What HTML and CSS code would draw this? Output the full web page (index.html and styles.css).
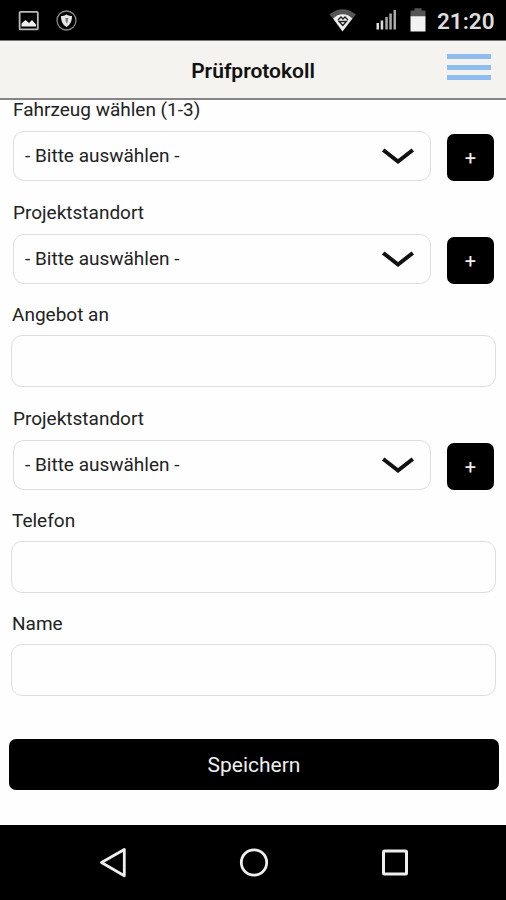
FILE: index.html
```html
<!DOCTYPE html>
<html lang="de">
<head>
<meta charset="utf-8">
<title>Prüfprotokoll</title>
<link rel="stylesheet" href="styles.css">
</head>
<body>
<div class="status">
  <svg class="notifications" width="70" height="40" viewBox="0 0 70 40">
    <rect x="1.6" y="11.8" width="18.2" height="17.6" rx="1" fill="none" stroke="#bbb" stroke-width="1.8"/>
    <path d="M3.500 26.500v-3l4-3.500 3.500 3 3-3 4 4.500v2z" fill="#eee"/>
    <circle cx="48.500" cy="20.500" r="9.500" fill="none" stroke="#888" stroke-width="1.300"/>
    <path d="M48.500 14.500c2 1.200 3.500 1.500 5.500 1.500 0 5-1.500 8.500-5.500 11-4-2.500-5.500-6-5.500-11 2 0 3.500-.3 5.500-1.500z" fill="#e5e5e5"/>
    <path d="M47.300 18h3l-1 5h-1.200z" fill="#777"/>
  </svg>
  <svg class="signals" width="100" height="40" viewBox="329 0 100 40">
    <path d="M329.500 14.500q13-10.500 26.500 0l-3.500 4q-10-6-19.500 0z" fill="#555"/>
    <path d="M333 18.500l4-3q5.500-2.300 11.500 0l4 3L342.500 31.500z" fill="#eee"/>
    <path d="M338 20l3-3 2 2 2-2 3 3M339 21.500h7.500l-3.700 4z" fill="none" stroke="#222" stroke-width="1.300"/>
    <path d="M376.500 23h2.500v6.500h-2.500zM380.700 20.500h2.500v9h-2.500z" fill="#ddd"/>
    <path d="M385.300 17h2.500v12.500h-2.500zM389.300 13.500h2.500v16h-2.500zM393.500 10h2.500v19.500h-2.500z" fill="#aaa"/>
    <path d="M410.500 10.500h4v-2.300h7v2.300h4v6h-15z" fill="#555"/>
    <path d="M410.500 16.200h15v15.300h-15z" fill="#f2f2f2"/>
  </svg>
  <span class="clock">21:20</span>
</div>
<header class="header">
  <h1 class="title">Prüfprotokoll</h1>
  <div class="menu"><i></i><i></i><i></i></div>
</header>
<main class="form">
  <div class="field choice">
    <label class="label">Fahrzeug wählen (1-3)</label>
    <div class="row">
      <div class="select"><span>- Bitte auswählen -</span><svg width="34" height="20" viewBox="0 0 34 20"><path d="M2.200 4L17 15.500 31.800 4" fill="none" stroke="#111" stroke-width="4"/></svg></div>
      <button class="add">+</button>
    </div>
  </div>
  <div class="field choice">
    <label class="label">Projektstandort</label>
    <div class="row">
      <div class="select"><span>- Bitte auswählen -</span><svg width="34" height="20" viewBox="0 0 34 20"><path d="M2.200 4L17 15.500 31.800 4" fill="none" stroke="#111" stroke-width="4"/></svg></div>
      <button class="add">+</button>
    </div>
  </div>
  <div class="field entry">
    <label class="label">Angebot an</label>
    <div class="input"></div>
  </div>
  <div class="field choice">
    <label class="label">Projektstandort</label>
    <div class="row">
      <div class="select"><span>- Bitte auswählen -</span><svg width="34" height="20" viewBox="0 0 34 20"><path d="M2.200 4L17 15.500 31.800 4" fill="none" stroke="#111" stroke-width="4"/></svg></div>
      <button class="add">+</button>
    </div>
  </div>
  <div class="field entry">
    <label class="label">Telefon</label>
    <div class="input"></div>
  </div>
  <div class="field entry">
    <label class="label">Name</label>
    <div class="input"></div>
  </div>
  <button class="save">Speichern</button>
</main>
<nav class="nav">
  <svg width="28" height="32" viewBox="0 0 28 32"><path d="M2.500 15.500L25.300 2.500v26.300z" fill="none" stroke="#eee" stroke-width="2.800" stroke-linejoin="round"/></svg>
  <svg width="30" height="32" viewBox="0 0 30 32"><circle cx="15" cy="15.500" r="12.700" fill="none" stroke="#eee" stroke-width="2.800"/></svg>
  <svg width="28" height="32" viewBox="0 0 28 32"><rect x="2.500" y="4" width="23" height="23" rx="1" fill="none" stroke="#eee" stroke-width="3"/></svg>
</nav>
</body>
</html>
```
FILE: styles.css
```css
* { box-sizing: border-box; }
body {
  margin: 0;
  height: 900px;
  display: flex;
  flex-direction: column;
  overflow: hidden;
  background: #fefefe;
  color: #222;
  font-family: Roboto, "Liberation Sans", sans-serif;
}
svg { display: block; flex: none; }
button { border: 0; padding: 0; font-family: inherit; color: #eee; background: #000; }
.status {
  height: 40px;
  flex: none;
  display: flex;
  align-items: center;
  background: #000;
  padding: 0 11px 0 18px;
}
.signals { margin-left: auto; }
.clock {
  width: 58px;
  margin-left: 8px;
  color: #ddd;
  font-size: 22.5px;
  font-weight: 600;
  line-height: 40px;
  padding-top: 1px;
  white-space: nowrap;
}
.header {
  height: 60px;
  flex: none;
  display: grid;
  grid-template-columns: 1fr auto 1fr;
  align-items: center;
  background: #f4f3ef;
  border-top: 1px solid #777;
  border-bottom: 2px solid #858585;
  padding: 0 15px;
}
.title {
  grid-column: 2;
  margin: 2px 0 0;
  color: #111;
  font-size: 21px;
  font-weight: 600;
  line-height: 28px;
}
.menu {
  justify-self: end;
  width: 44px;
  display: grid;
  gap: 5.5px;
  margin-top: -5px;
}
.menu i { height: 5px; background: #8ebcef; }
.form { flex: 1; display: flex; flex-direction: column; }
.field { height: 103px; flex: none; }
.choice { padding: 0 12px 0 13px; }
.entry { padding: 0 10px 0 11px; }
.label {
  display: block;
  height: 31px;
  line-height: 20px;
  font-size: 19px;
}
.entry .label { height: 30px; padding-left: 1px; margin-top: -1px; }
.row { display: flex; justify-content: space-between; align-items: flex-end; }
.select {
  width: 418px;
  height: 50px;
  border: 1.500px solid #dedede;
  border-radius: 11px;
  display: flex;
  align-items: center;
  justify-content: space-between;
  padding: 0 15px 0 11px;
  font-size: 19px;
  line-height: 22px;
}
.add {
  width: 47px;
  height: 47px;
  border-radius: 7px;
  font-size: 20px;
}
.input { height: 52px; border: 1.500px solid #dedede; border-radius: 11px; }
.save {
  height: 51px;
  flex: none;
  margin: 21px 7px 0 9px;
  border-radius: 7px;
  font-size: 21px;
}
.nav {
  height: 75px;
  flex: none;
  display: flex;
  justify-content: center;
  align-items: center;
  gap: 112px;
  padding-left: 2px;
  background: #000;
}
```
